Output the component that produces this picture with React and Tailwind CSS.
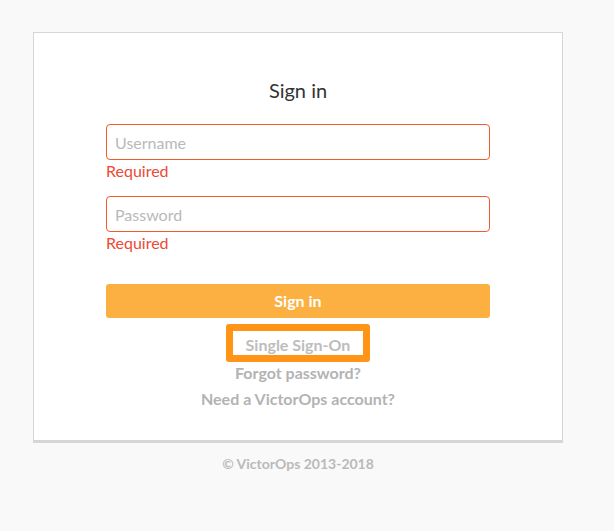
export default function App() {
  return (
    <div className="min-h-[531px] w-full bg-[#f9f9f9] pt-[32px]" style={{ fontFamily: 'Lato, "Open Sans", sans-serif' }}>
      <div className="ml-[33px] w-[530px] border border-b-[3px] border-[#d6d6d6] bg-white px-[72px] pb-[30px] pt-[43px]">
        <h1 className="text-center text-[20px] leading-[28px] font-normal text-[#333]">Sign in</h1>
        <div className="mt-[20px]">
          <input
            className="block h-[36px] w-full rounded-[4px] border border-[#f15a2b] px-[8px] text-[16px] text-[#333] outline-none placeholder:text-[#b9b9b9]"
            placeholder="Username"
            style={{ fontFamily: 'Lato, sans-serif' }}
          />
          <div className="mt-[1px] h-[20px] text-[16px] leading-[20px] text-[#ec4a36]">Required</div>
        </div>
        <div className="mt-[15px]">
          <input
            type="password"
            className="block h-[36px] w-full rounded-[4px] border border-[#f15a2b] px-[8px] text-[16px] text-[#333] outline-none placeholder:text-[#b9b9b9]"
            placeholder="Password"
            style={{ fontFamily: 'Lato, sans-serif' }}
          />
          <div className="mt-[1px] h-[20px] text-[16px] leading-[20px] text-[#ec4a36]">Required</div>
        </div>
        <button className="mt-[31px] block h-[34px] w-full rounded-[3px] bg-[#fdb042] text-[16px] font-bold text-white">
          Sign in
        </button>
        <div className="flex flex-col items-center">
          <div className="mt-[6px] flex h-[38px] w-[144px] items-center justify-center rounded-[3px] border-[7px] border-[#ff9416] bg-white pt-[3px]">
            <span className="whitespace-nowrap text-[16px] font-bold leading-[20px] text-[#bdbdbd]">Single Sign-On</span>
          </div>
          <div className="text-[16px] font-bold leading-[22px] text-[#b3b3b3]">Forgot password?</div>
          <div className="mt-[4px] text-[16px] font-bold leading-[22px] text-[#b3b3b3]">Need a VictorOps account?</div>
        </div>
      </div>
      <div className="ml-[33px] mt-[12px] w-[530px] text-center text-[14px] font-bold leading-[18px] text-[#bababa]">
        © VictorOps 2013-2018
      </div>
    </div>
  );
}
